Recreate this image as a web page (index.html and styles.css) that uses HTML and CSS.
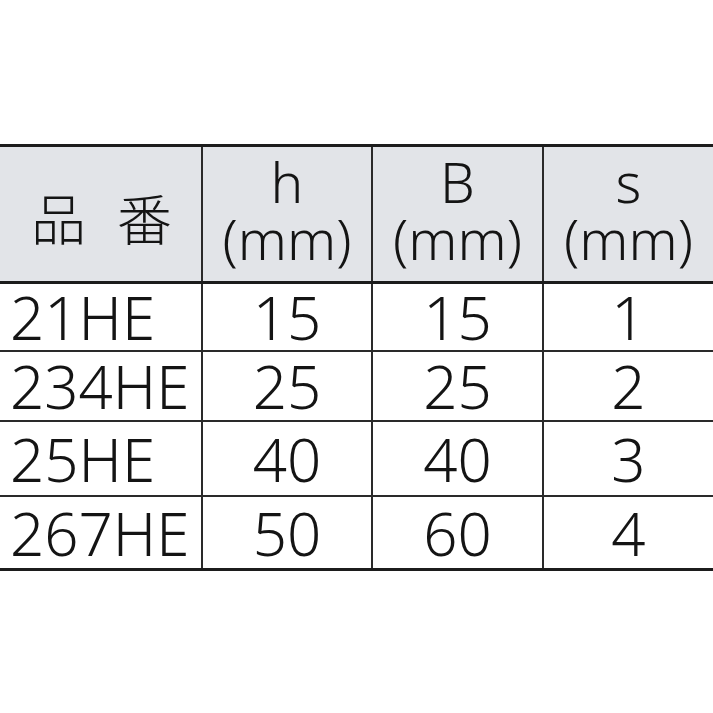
FILE: index.html
```html
<!DOCTYPE html>
<html lang="ja">
<head>
<meta charset="utf-8">
<link rel="stylesheet" href="styles.css">
</head>
<body>
<div class="page">
<table class="spec">
  <colgroup>
    <col class="c1"><col class="c2"><col class="c3"><col class="c4">
  </colgroup>
  <thead>
    <tr>
      <th class="name">品番</th>
      <th><span class="ln">h</span><span class="ln">(mm)</span></th>
      <th><span class="ln">B</span><span class="ln">(mm)</span></th>
      <th><span class="ln">s</span><span class="ln">(mm)</span></th>
    </tr>
  </thead>
  <tbody>
    <tr class="r1"><td class="code">21HE</td><td>15</td><td>15</td><td>1</td></tr>
    <tr class="r2"><td class="code">234HE</td><td>25</td><td>25</td><td>2</td></tr>
    <tr class="r3"><td class="code">25HE</td><td>40</td><td>40</td><td>3</td></tr>
    <tr class="r4"><td class="code">267HE</td><td>50</td><td>60</td><td>4</td></tr>
  </tbody>
</table>
</div>
</body>
</html>
```

FILE: styles.css
```css
html, body {
  margin: 0;
  padding: 0;
  background: #ffffff;
}
.page {
  width: 713px;
  height: 713px;
  padding-top: 144px;
  box-sizing: border-box;
  overflow: hidden;
}
.spec {
  width: 713px;
  border-collapse: collapse;
  table-layout: fixed;
  font-family: "Noto Sans", "Noto Sans CJK JP", sans-serif;
  color: #141414;
}
.c1 { width: 202px; }
.c2 { width: 170px; }
.c3 { width: 171px; }
.c4 { width: 170px; }
.spec th, .spec td {
  border: 2px solid #2a2a2a;
  padding: 0;
  text-align: center;
  font-weight: 300;
}
.spec tr > :first-child { border-left: none; }
.spec tr > :last-child { border-right: none; }
.spec thead th {
  background: #e2e4e8;
  border-top: 3px solid #1c1c1c;
  border-bottom: 3px solid #1c1c1c;
  height: 126px;
  font-size: 55px;
  padding: 0 0 8px;
}
.spec thead th .ln {
  display: block;
  height: 57px;
  line-height: 57px;
}
.spec thead th.name {
  font-family: "Noto Sans CJK JP", sans-serif;
  font-size: 55px;
  line-height: 60px;
  letter-spacing: 31px;
  text-indent: 31px;
  white-space: nowrap;
  padding: 4px 0 0;
  height: 130px;
}
.spec tbody td {
  font-size: 60px;
  line-height: 60px;
}
.spec tbody tr.r1 td { height: 66px; }
.spec tbody tr.r2 td { height: 68px; }
.spec tbody tr.r3 td { height: 73px; }
.spec tbody tr.r4 td { height: 71px; border-bottom: 3px solid #1c1c1c; }
.spec td.code {
  text-align: left;
  padding-left: 10px;
  white-space: nowrap;
}
```
